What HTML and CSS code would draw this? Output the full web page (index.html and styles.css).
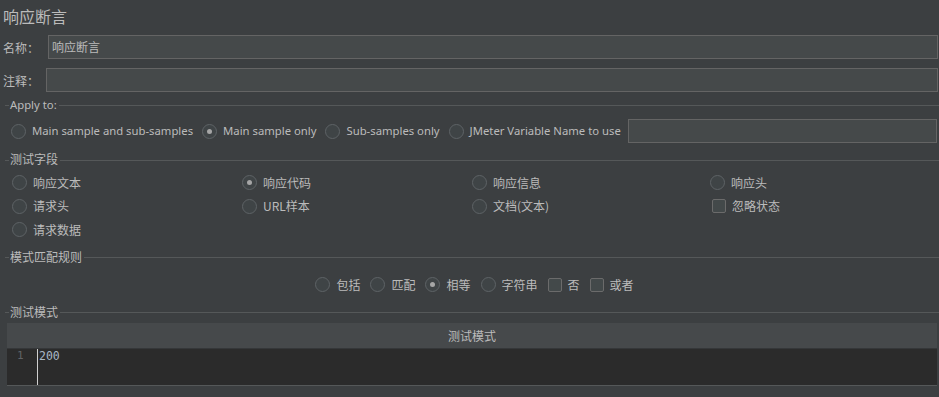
FILE: index.html
```html
<!DOCTYPE html>
<html lang="zh">
<head>
<meta charset="utf-8">
<title>响应断言</title>
<link rel="stylesheet" href="styles.css">
</head>
<body>
<div class="page">
  <div class="title">响应断言</div>

  <div class="field-row name-row">
    <label class="field-label name-label">名称：</label>
    <div class="text-input">响应断言</div>
  </div>
  <div class="field-row comment-row">
    <label class="field-label comment-label">注释：</label>
    <div class="text-input"></div>
  </div>

  <div class="group apply-group">
    <div class="group-head"><span class="dash"></span><span class="group-title">Apply to:</span><span class="line"></span></div>
    <div class="apply-row">
      <span class="opt"><span class="radio"></span><span class="opt-text">Main sample and sub-samples</span></span>
      <span class="opt"><span class="radio on"></span><span class="opt-text">Main sample only</span></span>
      <span class="opt"><span class="radio"></span><span class="opt-text">Sub-samples only</span></span>
      <span class="opt"><span class="radio"></span><span class="opt-text">JMeter Variable Name to use</span></span>
      <div class="text-input var-input"></div>
    </div>
  </div>

  <div class="group field-group">
    <div class="group-head"><span class="dash"></span><span class="group-title">测试字段</span><span class="line"></span></div>
    <div class="field-grid">
      <span class="opt"><span class="radio"></span><span class="opt-text">响应文本</span></span>
      <span class="opt"><span class="radio on"></span><span class="opt-text">响应代码</span></span>
      <span class="opt"><span class="radio"></span><span class="opt-text">响应信息</span></span>
      <span class="opt"><span class="radio"></span><span class="opt-text">响应头</span></span>
      <span class="opt"><span class="radio"></span><span class="opt-text">请求头</span></span>
      <span class="opt"><span class="radio"></span><span class="opt-text">URL样本</span></span>
      <span class="opt"><span class="radio"></span><span class="opt-text">文档(文本)</span></span>
      <span class="opt"><span class="check"></span><span class="opt-text">忽略状态</span></span>
      <span class="opt"><span class="radio"></span><span class="opt-text">请求数据</span></span>
    </div>
  </div>

  <div class="group rule-group">
    <div class="group-head"><span class="dash"></span><span class="group-title">模式匹配规则</span><span class="line"></span></div>
    <div class="rule-row">
      <span class="opt"><span class="radio"></span><span class="opt-text">包括</span></span>
      <span class="opt"><span class="radio"></span><span class="opt-text">匹配</span></span>
      <span class="opt"><span class="radio on"></span><span class="opt-text">相等</span></span>
      <span class="opt"><span class="radio"></span><span class="opt-text">字符串</span></span>
      <span class="opt"><span class="check"></span><span class="opt-text">否</span></span>
      <span class="opt"><span class="check"></span><span class="opt-text">或者</span></span>
    </div>
  </div>

  <div class="group pattern-group">
    <div class="group-head"><span class="dash"></span><span class="group-title">测试模式</span><span class="line"></span></div>
    <div class="table">
      <div class="table-head">测试模式</div>
      <div class="editor">
        <div class="gutter">1</div>
        <div class="code">200</div>
      </div>
    </div>
  </div>
</div>
</body>
</html>
```

FILE: styles.css
```css
* { box-sizing: border-box; }
html, body { margin: 0; padding: 0; }
body {
  background: #3c3f41;
  color: #bbbbbb;
  font-family: "Noto Sans", "Noto Sans CJK SC", sans-serif;
  font-size: 12px;
  width: 939px;
  height: 397px;
  overflow: hidden;
}
.page { display: flex; flex-direction: column; }

.title {
  font-family: "Noto Sans CJK SC", sans-serif;
  font-size: 16px;
  line-height: 20px;
  height: 33px;
  padding: 6px 0 0 3px;
}

.field-row { display: flex; align-items: center; height: 24px; }
.name-row { margin-top: 2px; }
.comment-row { margin-top: 9px; }
.field-label {
  font-family: "Noto Sans CJK SC", sans-serif;
  font-size: 12px;
  padding-left: 3px;
}
.name-label { width: 48px; }
.comment-label { width: 46px; }

.text-input {
  flex: 1;
  height: 24px;
  background: #45494a;
  border: 1px solid #646464;
  font-family: "Noto Sans CJK SC", sans-serif;
  font-size: 12px;
  line-height: 22px;
  padding-left: 3px;
  margin-right: 1px;
}

.group { display: flex; flex-direction: column; }
.group-head {
  display: flex;
  align-items: center;
  height: 16px;
  padding-left: 5px;
}
.group-head .dash { width: 4px; height: 1px; background: #555859; }
.group-head .line { flex: 1; height: 1px; background: #555859; margin-left: 2px; }
.group-title {
  font-family: "Noto Sans", "Noto Sans CJK SC", sans-serif;
  font-size: 12px;
  line-height: 16px;
  padding-left: 1px;
}
.apply-group .group-title { font-size: 11.3px; }

.apply-group { margin-top: 5px; }
.apply-row {
  display: flex;
  align-items: center;
  height: 24px;
  margin-top: 6px;
  padding-left: 11px;
  font-size: 11.3px;
}
.apply-row .opt { margin-right: 9px; }
.apply-row .opt:nth-child(2) { margin-right: 9px; }
.apply-row .opt:nth-child(3) { margin-right: 9px; }
.apply-row .opt:nth-child(4) { margin-right: 7px; }
.var-input { margin-right: 2px; }

.opt { display: inline-flex; align-items: center; white-space: nowrap; }
.opt-text { line-height: 16px; }
.radio {
  width: 15px; height: 15px;
  border-radius: 50%;
  border: 1px solid #5e6366;
  background: #3f4446;
  margin-right: 6px;
  display: inline-flex; align-items: center; justify-content: center;
  flex: none;
}
.radio.on::after {
  content: "";
  width: 5px; height: 5px; border-radius: 50%;
  background: #a6a6a6;
}
.check {
  width: 14px; height: 14px;
  border: 1px solid #6b6b6b;
  border-radius: 2px;
  background: #43494a;
  margin-right: 6px;
  flex: none;
}

.field-group { margin-top: 9px; }
.field-grid {
  display: grid;
  grid-template-columns: 230px 230px 238px 1fr;
  grid-auto-rows: 23.5px;
  padding-left: 12px;
  margin-top: 3px;
  font-family: "Noto Sans CJK SC", sans-serif;
}
.field-grid .check { margin-left: 2px; margin-right: 6px; }

.rule-group { margin-top: 8px; }
.rule-row {
  display: flex;
  justify-content: center;
  align-items: center;
  gap: 10px;
  height: 24px;
  margin-top: 7px;
  padding-left: 10px;
  font-family: "Noto Sans CJK SC", sans-serif;
}
.rule-row .opt .radio { margin-right: 6px; }

.pattern-group { margin-top: 8px; }
.table {
  margin: 2px 2px 0 7px;
  display: flex; flex-direction: column;
}
.table-head {
  height: 26px;
  background: #46494b;
  border-bottom: 1px solid #353739;
  text-align: center;
  line-height: 25px;
  font-family: "Noto Sans CJK SC", sans-serif;
}
.editor {
  display: flex;
  height: 37px;
  background: #2b2b2b;
  border-bottom: 1px solid #555859;
}
.gutter {
  width: 31px;
  border-right: 1px solid #d0d0d0;
  color: #606366;
  font-family: "DejaVu Sans Mono", monospace;
  font-size: 11px;
  padding-left: 10px;
  line-height: 14px;
}
.code {
  color: #a9b7c6;
  font-family: "DejaVu Sans Mono", monospace;
  font-size: 11.5px;
  line-height: 14px;
  padding-left: 1px;
}
```
